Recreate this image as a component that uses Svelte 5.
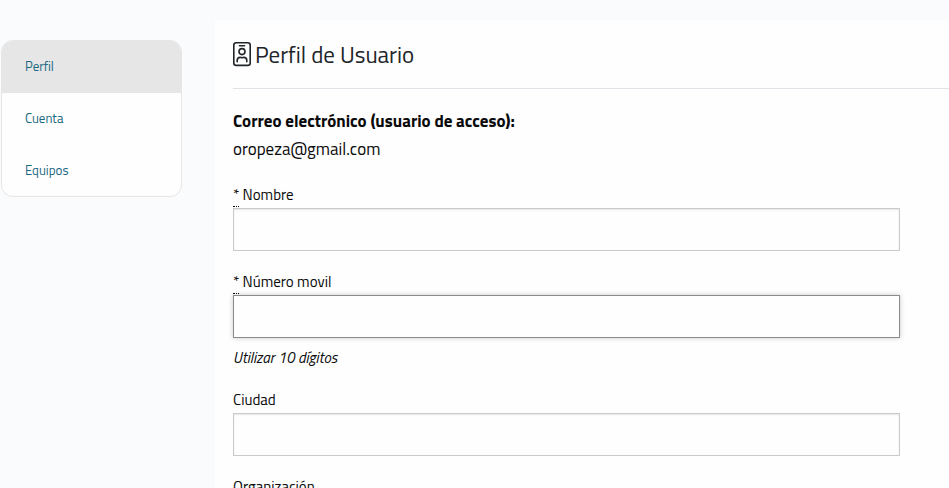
<script>
  const links = ["Perfil", "Cuenta", "Equipos"];
  let active = $state("Perfil");

  let fields = $state([
    { id: "nombre", label: "Nombre", required: true, value: "" },
    { id: "movil", label: "Número movil", required: true, hint: "Utilizar 10 dígitos", value: "" },
    { id: "ciudad", label: "Ciudad", value: "" },
    { id: "organizacion", label: "Organización", value: "" },
  ]);
  let current = $state("movil");
</script>

<div class="page">
  <nav class="menu">
    {#each links as link}
      <a href="#{link.toLowerCase()}" class:active={active === link} onclick={() => (active = link)}>{link}</a>
    {/each}
  </nav>

  <main>
    <h1>
      <svg class="badge-icon" viewBox="0 0 20 26" aria-hidden="true">
        <rect x="0.8" y="0.8" width="16.4" height="22.6" rx="2.5" />
        <path d="M6.5 3.8h5" />
        <circle cx="9" cy="9.6" r="3" />
        <path d="M4.2 19.8v-1.2c0-2 1.2-3.2 3-3.2.8 0 1 .3 1.8.3s1-.3 1.8-.3c1.8 0 3 1.2 3 3.2v1.2" />
      </svg>
      Perfil de Usuario
    </h1>

    <div class="account">
      <strong>Correo electrónico (usuario de acceso):</strong>
      <span>oropeza@gmail.com</span>
    </div>

    <form>
      {#each fields as field}
        <div class="field">
          <label for={field.id}>
            {#if field.required}<abbr title="requerido">*</abbr>{/if}
            {field.label}
          </label>
          <input
            type="text"
            id={field.id}
            class:focused={current === field.id}
            bind:value={field.value}
            onfocus={() => (current = field.id)}
          />
          {#if field.hint}
            <p class="hint">{field.hint}</p>
          {/if}
        </div>
      {/each}
    </form>
  </main>
</div>

<style>
  :global(body) {
    background: #fafbfd;
    color: #0a0a0a;
    font-family: "Titillium Web", Roboto, sans-serif;
  }

  :global(html) {
    scrollbar-width: none;
  }

  .page {
    display: flex;
    align-items: flex-start;
    gap: 33px;
    padding: 20px 0 0 1px;
  }

  .menu {
    box-sizing: border-box;
    flex: 0 0 181px;
    margin-top: 20px;
    border: 1px solid #e6e6e6;
    border-radius: 12px;
    background: #fefefe;
    overflow: hidden;
  }

  .menu a {
    display: block;
    padding: 14px 23px 16px;
    font-size: 13px;
    line-height: 22px;
    color: #1b6883;
    text-decoration: none;
  }

  .menu a:last-child {
    padding-bottom: 15px;
  }

  .menu a.active {
    background: #e6e6e6;
  }

  main {
    flex: 1;
    min-width: 0;
    padding: 18px 0 18px 18px;
    background: #fefefe;
  }

  h1 {
    display: flex;
    align-items: center;
    gap: 2px;
    margin: 0 0 18px;
    padding-bottom: 16px;
    border-bottom: 1px solid #e1e2e8;
    font-size: 23px;
    font-weight: 400;
    line-height: 34px;
    color: #212529;
  }

  .badge-icon {
    width: 20px;
    height: 26px;
    fill: none;
    stroke: #212529;
    stroke-width: 1.6;
    stroke-linecap: round;
    stroke-linejoin: round;
  }

  .account {
    display: flex;
    flex-direction: column;
    margin-bottom: 18px;
    font-size: 17px;
    line-height: 28px;
  }

  form {
    padding-right: 49px;
  }

  .field {
    margin-bottom: 17px;
  }

  label {
    display: block;
    font-size: 15px;
    line-height: 27px;
  }

  abbr {
    text-decoration: none;
    border-bottom: 1px dotted #0a0a0a;
  }

  input {
    display: block;
    box-sizing: border-box;
    width: 100%;
    height: 43px;
    padding: 9px;
    border: 1px solid #cacaca;
    border-radius: 0;
    background: #fefefe;
    box-shadow: inset 0 1px 2px rgba(10, 10, 10, 0.1);
    font-family: inherit;
    font-size: 17px;
  }

  input.focused {
    outline: none;
    border-color: #8a8a8a;
    box-shadow: 0 0 5px #cacaca;
  }

  .hint {
    margin: 9px 0 0;
    font-size: 15px;
    font-style: italic;
    line-height: 22px;
  }
</style>
